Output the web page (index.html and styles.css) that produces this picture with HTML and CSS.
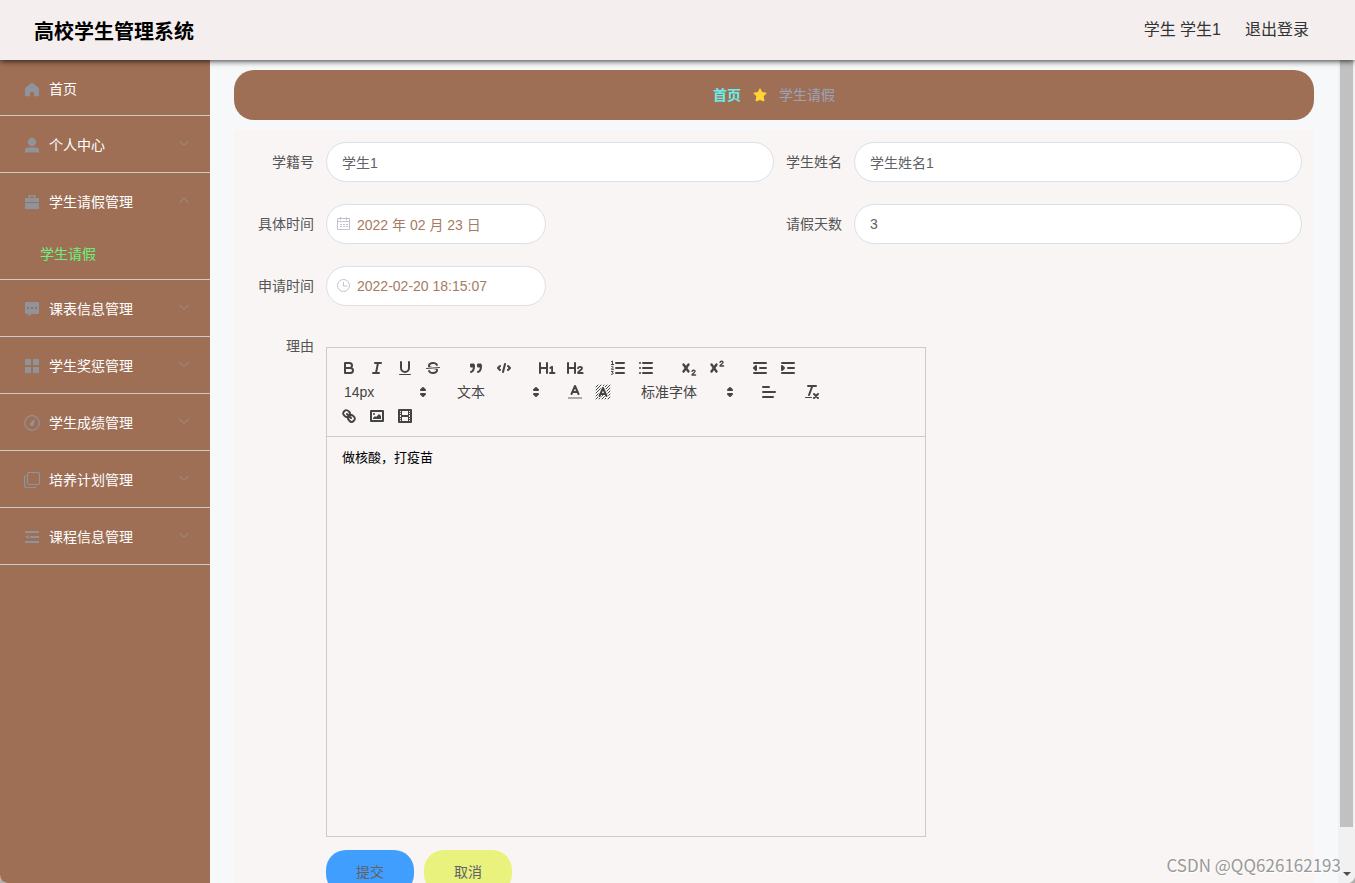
FILE: index.html
```html
<!DOCTYPE html>
<html lang="zh-CN">
<head>
<meta charset="utf-8">
<title>高校学生管理系统</title>
<link rel="stylesheet" href="styles.css">
</head>
<body>
<div class="app">
  <header class="topbar">
    <h1 class="brand">高校学生管理系统</h1>
    <div class="account">
      <span>学生 学生1</span>
      <a href="#logout">退出登录</a>
    </div>
  </header>

  <div class="shell">
    <nav class="sidebar" aria-label="主菜单">
      <div class="menu-group">
        <a class="menu-item menu-home" href="#home">
          <svg class="menu-icon" viewBox="0 0 16 16"><path class="solid" d="M8 1.500 15 7v7.500a.7.7 0 0 1-.7.7H10v-4H6v4H1.700a.7.7 0 0 1-.7-.7V7z"/></svg>
          <span class="menu-label">首页</span>
        </a>
      </div>
      <div class="menu-group">
        <a class="menu-item" href="#profile">
          <svg class="menu-icon" viewBox="0 0 16 16"><circle class="solid" cx="8" cy="5" r="4.200"/><path class="solid" d="M1 15.500v-2a3 3 0 0 1 3-3h8a3 3 0 0 1 3 3v2z"/></svg>
          <span class="menu-label">个人中心</span>
          <svg class="chevron" viewBox="0 0 12 12"><path d="m1.500 4 4.500 4.500L10.500 4"/></svg>
        </a>
      </div>
      <div class="menu-group">
        <a class="menu-item" href="#leave-manage">
          <svg class="menu-icon" viewBox="0 0 16 16"><path class="solid" fill-rule="evenodd" d="M4.500 1h7v3H15v4H1V4h3.500zM6 2.500V4h4V2.500z"/><path class="solid" d="M1 9h14v6H1z"/></svg>
          <span class="menu-label">学生请假管理</span>
          <svg class="chevron" viewBox="0 0 12 12"><path d="M1.500 8.500 6 4l4.500 4.500"/></svg>
        </a>
        <a class="submenu-item" href="#leave">学生请假</a>
      </div>
      <div class="menu-group">
        <a class="menu-item" href="#timetable">
          <svg class="menu-icon" viewBox="0 0 16 16"><path class="solid" fill-rule="evenodd" d="M2 1h12a1 1 0 0 1 1 1v10a1 1 0 0 1-1 1H8l-3.500 2.500V13H2a1 1 0 0 1-1-1V2a1 1 0 0 1 1-1zM3 6v2h2V6zm4 0v2h2V6zm4 0v2h2V6z"/></svg>
          <span class="menu-label">课表信息管理</span>
          <svg class="chevron" viewBox="0 0 12 12"><path d="m1.500 4 4.500 4.500L10.500 4"/></svg>
        </a>
      </div>
      <div class="menu-group">
        <a class="menu-item" href="#awards">
          <svg class="menu-icon" viewBox="0 0 16 16"><g class="solid"><rect x="1" y="1" width="6" height="6" rx=".5"/><rect x="9" y="1" width="6" height="6" rx=".5"/><rect x="1" y="9" width="6" height="6" rx=".5"/><rect x="9" y="9" width="6" height="6" rx=".5"/></g></svg>
          <span class="menu-label">学生奖惩管理</span>
          <svg class="chevron" viewBox="0 0 12 12"><path d="m1.500 4 4.500 4.500L10.500 4"/></svg>
        </a>
      </div>
      <div class="menu-group">
        <a class="menu-item" href="#grades">
          <svg class="menu-icon" viewBox="0 0 16 16"><circle class="outline" cx="8" cy="8" r="7.300"/><path class="solid" d="M10.800 3.500 10 9.300a2 2 0 1 1-3.700-1.300z"/></svg>
          <span class="menu-label">学生成绩管理</span>
          <svg class="chevron" viewBox="0 0 12 12"><path d="m1.500 4 4.500 4.500L10.500 4"/></svg>
        </a>
      </div>
      <div class="menu-group">
        <a class="menu-item" href="#plans">
          <svg class="menu-icon" viewBox="0 0 16 16"><rect class="outline" x="3.500" y=".5" width="12" height="12" rx="1.500"/><path class="outline" d="M2 4H.5v9.500a2 2 0 0 0 2 2H11l1-1"/></svg>
          <span class="menu-label">培养计划管理</span>
          <svg class="chevron" viewBox="0 0 12 12"><path d="m1.500 4 4.500 4.500L10.500 4"/></svg>
        </a>
      </div>
      <div class="menu-group">
        <a class="menu-item" href="#courses">
          <svg class="menu-icon" viewBox="0 0 16 16"><path class="solid" d="M1 2h14v2H1zM6 7h9v2H6zM1 12h14v2H1zM1 8l3.500-2v4z"/></svg>
          <span class="menu-label">课程信息管理</span>
          <svg class="chevron" viewBox="0 0 12 12"><path d="m1.500 4 4.500 4.500L10.500 4"/></svg>
        </a>
      </div>
    </nav>

    <main class="content">
      <nav class="breadcrumb" aria-label="当前位置">
        <a class="crumb-home" href="#home">首页</a>
        <svg class="crumb-star" viewBox="0 0 14 14"><path d="m7 .8 1.900 3.700 4.300.7-3 3 .8 4.800L7 11.500 3 13l.8-4.800-3-3 4.300-.7z"/></svg>
        <span class="crumb-current">学生请假</span>
      </nav>

      <form class="panel">
        <div class="field">
          <label class="label" for="student-no">学籍号</label>
          <input class="text-input" id="student-no" type="text" value="学生1">
        </div>
        <div class="field">
          <label class="label" for="student-name">学生姓名</label>
          <input class="text-input" id="student-name" type="text" value="学生姓名1">
        </div>
        <div class="field">
          <label class="label" for="leave-date">具体时间</label>
          <div class="date-box">
            <svg class="date-icon" viewBox="0 0 14 14"><path d="M.5 1.500h12v11H.5zM.5 4.500h12M3.500 0v3M9.500 0v3M3 7.500h2M6 7.500h2M9 7.500h2M3 9.500h2M6 9.500h2M9 9.500h2"/></svg>
            <input class="date-input" id="leave-date" type="text" value="2022 年 02 月 23 日">
          </div>
        </div>
        <div class="field">
          <label class="label" for="leave-days">请假天数</label>
          <input class="text-input" id="leave-days" type="text" value="3">
        </div>
        <div class="field field-wide">
          <label class="label" for="apply-time">申请时间</label>
          <div class="date-box">
            <svg class="date-icon" viewBox="0 0 14 14"><circle cx="6.500" cy="6.500" r="6"/><path d="M6.500 3v4h4"/></svg>
            <input class="date-input" id="apply-time" type="text" value="2022-02-20 18:15:07">
          </div>
        </div>
        <div class="field field-wide field-editor">
          <label class="label" for="reason">理由</label>
          <div class="editor">
            <div class="toolbar">
              <div class="tools">
                <button class="tool" type="button" aria-label="加粗"><svg viewBox="0 0 18 18"><path d="M5 4h4.500a2.500 2.500 0 0 1 0 5H5zM5 9h5.500a2.500 2.500 0 0 1 0 5H5z"/></svg></button>
                <button class="tool" type="button" aria-label="斜体"><svg viewBox="0 0 18 18"><path d="M7 4h6M5 14h6M8 14l2-10"/></svg></button>
                <button class="tool" type="button" aria-label="下划线"><svg viewBox="0 0 18 18"><path d="M5 3v6a4 4 0 0 0 8 0V3"/><rect class="fill" x="3" y="15" width="12" height="1" rx=".5"/></svg></button>
                <button class="tool" type="button" aria-label="删除线"><svg viewBox="0 0 18 18"><path class="thin" d="m15.500 8.500-13 1"/><path class="fill" d="M9.007 8C6.542 7.791 6 7.519 6 6.500 6 5.792 7.283 5 9 5c1.571 0 2.765.679 2.969 1.309a1 1 0 0 0 1.900-.617C13.356 4.106 11.354 3 9 3 6.200 3 4 4.538 4 6.500a3.200 3.200 0 0 0 .5 1.843zM8.984 10C11.457 10.208 12 10.479 12 11.500c0 .708-1.283 1.500-3 1.500-1.571 0-2.765-.679-2.969-1.309a1 1 0 1 0-1.900.617C4.644 13.894 6.646 15 9 15c2.800 0 5-1.538 5-3.500a3.200 3.200 0 0 0-.5-1.843z"/></svg></button>
              </div>
              <div class="tools">
                <button class="tool" type="button" aria-label="引用"><svg viewBox="0 0 18 18"><path class="both thin" d="M4 5h3v3H4zM11 5h3v3h-3z"/><path d="M7 7c0 5-3 6-3 6M14 7c0 5-3 6-3 6M4.500 6h2M11.500 6h2"/></svg></button>
                <button class="tool" type="button" aria-label="代码"><svg viewBox="0 0 18 18"><path d="M5 7 3 9l2 2M13 7l2 2-2 2M10 5 8 13"/></svg></button>
              </div>
              <div class="tools">
                <button class="tool" type="button" aria-label="一级标题"><svg viewBox="0 0 18 18"><path d="M2 4v10M9 4v10M2 9h7"/><path class="digit" d="m12.200 9 1.900-1.300V14M12 14h4.500"/></svg></button>
                <button class="tool" type="button" aria-label="二级标题"><svg viewBox="0 0 18 18"><path d="M2 4v10M9 4v10M2 9h7"/><path class="digit" d="M12 9.300c.4-2 4-2 4 0 0 1.700-3.500 2.700-4 4.700h4.700"/></svg></button>
              </div>
              <div class="tools">
                <button class="tool" type="button" aria-label="有序列表"><svg viewBox="0 0 18 18"><path d="M7 4h8M7 9h8M7 14h8"/><path class="thin" d="m2.500 2.500 1-.5v3.500M2.300 5.500h2.400M2.500 7.500c1-.8 2 0 1.500.8l-1.700 2h2.400M2.400 12.400h1.800l-1 1.300c2 0 1.300 2-.8 1.600"/></svg></button>
                <button class="tool" type="button" aria-label="无序列表"><svg viewBox="0 0 18 18"><path d="M6 4h9M6 9h9M6 14h9M3 4h0M3 9h0M3 14h0"/></svg></button>
              </div>
              <div class="tools">
                <button class="tool" type="button" aria-label="下标"><svg viewBox="0 0 18 18"><path class="cross" d="m3.500 5.500 5 7M8.500 5.500l-5 7"/><path class="index" d="M12 12.300c.3-1.500 3.200-1.500 3 .2-.1 1-2.600 2-3 3.500h3.600"/></svg></button>
                <button class="tool" type="button" aria-label="上标"><svg viewBox="0 0 18 18"><path class="cross" d="m3.500 5.500 5 7M8.500 5.500l-5 7"/><path class="index" d="M12 3.300c.3-1.500 3.200-1.500 3 .2-.1 1-2.600 2-3 3.500h3.600"/></svg></button>
              </div>
              <div class="tools">
                <button class="tool" type="button" aria-label="减少缩进"><svg viewBox="0 0 18 18"><path d="M3 4h12M9 9h6M3 14h12"/><path class="both" d="M5 7v4L3 9z"/></svg></button>
                <button class="tool" type="button" aria-label="增加缩进"><svg viewBox="0 0 18 18"><path d="M3 4h12M9 9h6M3 14h12"/><path class="both" d="M3 7v4l2-2z"/></svg></button>
              </div>
              <div class="tools picker">
                <select class="picker-select" aria-label="字号"><option>14px</option></select>
                <svg class="picker-arrow" viewBox="0 0 18 18"><path class="both" d="m7 11 2 2 2-2zM7 7l2-2 2 2z"/></svg>
              </div>
              <div class="tools picker">
                <select class="picker-select" aria-label="段落格式"><option>文本</option></select>
                <svg class="picker-arrow" viewBox="0 0 18 18"><path class="both" d="m7 11 2 2 2-2zM7 7l2-2 2 2z"/></svg>
              </div>
              <div class="tools">
                <button class="tool" type="button" aria-label="文字颜色"><svg viewBox="0 0 18 18"><path class="swatch" d="M2 15h14"/><path d="M5.500 11 9 3l3.500 8M11.600 9H6.400"/></svg></button>
                <button class="tool" type="button" aria-label="背景颜色"><svg viewBox="0 0 18 18"><path class="hatch" d="M2 4l2-2M2 7l5-5M2 10l8-8M2 13l11-11M2 16 16 2M5 16 16 5M8 16l8-8M11 16l5-5M14 16l2-2"/><path class="halo" d="M5.500 13 9 5l3.500 8"/><path d="M5.500 13 9 5l3.500 8M11.600 11H6.400"/></svg></button>
              </div>
              <div class="tools picker picker-font">
                <select class="picker-select" aria-label="字体"><option>标准字体</option></select>
                <svg class="picker-arrow" viewBox="0 0 18 18"><path class="both" d="m7 11 2 2 2-2zM7 7l2-2 2 2z"/></svg>
              </div>
              <div class="tools">
                <button class="tool" type="button" aria-label="对齐"><svg viewBox="0 0 18 18"><path d="M3 4h6M3 9h12M3 14h10"/></svg></button>
              </div>
              <div class="tools">
                <button class="tool" type="button" aria-label="清除格式"><svg viewBox="0 0 18 18"><path d="M5 3h8M6 12l3.350-9M11 11l4 4M15 11l-4 4"/><rect class="fill" x="2" y="14" width="7" height="1" rx=".5"/></svg></button>
              </div>
              <div class="tools">
                <button class="tool" type="button" aria-label="链接"><svg viewBox="0 0 18 18"><path d="m7 7 4 4M8.900 4.577a3.476 3.476 0 0 1 .36 4.679A3.476 3.476 0 0 1 4.577 8.900C3.185 7.500 2.035 6.400 4.217 4.217S7.500 3.185 8.900 4.577zM13.423 9.100a3.476 3.476 0 0 0-4.679-.36 3.476 3.476 0 0 0 .36 4.679c1.392 1.392 2.500 2.542 4.679.36S14.815 10.500 13.423 9.100z"/></svg></button>
                <button class="tool" type="button" aria-label="图片"><svg viewBox="0 0 18 18"><rect x="3" y="4" width="12" height="10"/><circle class="fill" cx="6" cy="7" r="1"/><path class="fill" d="M5 12v-1l2-2 1 1 3-3 2 2v3z"/></svg></button>
                <button class="tool" type="button" aria-label="视频"><svg viewBox="0 0 18 18"><rect x="3" y="3" width="12" height="12"/><path class="fill" d="M5 3h1v12H5zM12 3h1v12h-1zM5 8h8v2H5zM3 5h3v1H3zM3 7h3v1H3zM3 10h3v1H3zM3 12h3v1H3zM12 5h3v1h-3zM12 7h3v1h-3zM12 10h3v1h-3zM12 12h3v1h-3z"/></svg></button>
              </div>
            </div>
            <textarea class="editor-text" id="reason">做核酸，打疫苗</textarea>
          </div>
        </div>
        <div class="actions">
          <button class="action action-submit" type="submit">提交</button>
          <button class="action action-cancel" type="button">取消</button>
        </div>
      </form>
    </main>

    <div class="scroll-track" aria-hidden="true">
      <div class="scroll-thumb"></div>
      <svg class="scroll-arrow" viewBox="0 0 8 4"><path d="M0 0h8L4 4z"/></svg>
    </div>
  </div>
  <div class="watermark">CSDN @QQ626162193</div>
</div>
</body>
</html>
```
FILE: styles.css
```css
* {
  box-sizing: border-box;
}

html {
  background: #b5b1af;
}

body {
  margin: 0;
  font-family: "Liberation Sans", "Noto Sans CJK SC", sans-serif;
  font-size: 14px;
  color: #606266;
}

a {
  color: inherit;
  text-decoration: none;
}

input,
select,
textarea,
button {
  font: inherit;
  color: inherit;
}

.app {
  position: relative;
  display: flex;
  flex-direction: column;
  height: 100vh;
  overflow: hidden;
  border-radius: 0 0 8px 8px;
  background: #f6f8fa;
}

/* Header */
.topbar {
  position: relative;
  z-index: 1;
  display: flex;
  flex: none;
  align-items: center;
  justify-content: space-between;
  height: 60px;
  padding: 0 46px 0 34px;
  background: #f4eeee;
  box-shadow: 0 1px 6px rgba(0, 0, 0, 0.8);
}

.brand {
  margin: 0;
  font-size: 20px;
  font-weight: 700;
  color: #000;
}

.account {
  display: flex;
  gap: 24px;
  font-size: 16px;
  line-height: 24px;
  color: #333;
}

.shell {
  display: flex;
  flex: 1;
  min-height: 0;
}

/* Side menu */
.sidebar {
  flex: none;
  width: 210px;
  background: #9e6f55;
}

.menu-group {
  border-bottom: 1px solid #ccc;
}

.menu-item {
  display: flex;
  align-items: center;
  height: 56px;
  padding: 0 20px 0 24px;
  color: #fff;
}

.menu-home {
  height: 55px;
}

.menu-label {
  flex: 1;
}

.menu-icon {
  width: 16px;
  height: 16px;
  margin: 2px 9px 0 0;
}

.solid {
  fill: #909399;
}

.outline {
  fill: none;
  stroke: #909399;
  stroke-width: 1.2;
}

.chevron {
  width: 12px;
  height: 12px;
  margin-bottom: 2px;
  fill: none;
  stroke: #9b938e;
}

.submenu-item {
  display: block;
  padding-left: 40px;
  line-height: 50px;
  color: #6cf27c;
}

/* Content */
.content {
  flex: 1;
  min-width: 0;
  padding: 10px 24px 0;
}

.breadcrumb {
  display: flex;
  align-items: center;
  justify-content: center;
  gap: 12px;
  height: 50px;
  margin-bottom: 10px;
  border-radius: 20px;
  line-height: 18px;
  background: #9e6f55;
}

.crumb-home {
  font-weight: 700;
  color: #68efee;
}

.crumb-star {
  width: 14px;
  height: 14px;
  fill: #ffd633;
  stroke: #ffd633;
  stroke-linejoin: round;
}

.crumb-current {
  color: #9aa3bb;
}

.panel {
  display: grid;
  grid-template-columns: 1fr 1fr;
  row-gap: 22px;
  padding: 12px;
  background: #f9f5f4;
}

.field {
  display: flex;
}

.field-wide,
.actions {
  grid-column: 1 / -1;
}

.label {
  flex: none;
  width: 80px;
  padding-right: 12px;
  line-height: 40px;
  text-align: right;
  color: #555;
}

.text-input,
.date-box {
  height: 40px;
  border: 1px solid #dcdfe6;
  border-radius: 20px;
  background: #fff;
}

.text-input {
  flex: 1;
  min-width: 0;
  padding: 0 15px;
}

.date-box {
  display: flex;
  align-items: center;
  gap: 6px;
  width: 220px;
  padding: 0 10px;
}

.date-icon {
  flex: none;
  width: 14px;
  height: 14px;
  fill: none;
  stroke: #c0c4cc;
}

.date-input {
  flex: 1;
  min-width: 0;
  padding: 0;
  border: 0;
  background: none;
  color: #a57b62;
}

/* Rich text editor */
.field-editor .label {
  line-height: 36px;
}

.editor {
  width: 600px;
  margin-top: 19px;
  border: 1px solid #ccc;
}

.toolbar {
  display: flex;
  flex-wrap: wrap;
  padding: 8px;
  border-bottom: 1px solid #ccc;
}

.tools {
  display: flex;
  margin-right: 15px;
}

.tool {
  width: 28px;
  height: 24px;
  padding: 3px 5px;
  border: 0;
  background: none;
}

.tool svg,
.picker-arrow {
  display: block;
  width: 18px;
  height: 18px;
  fill: none;
  stroke: #444;
  stroke-width: 2;
  stroke-linecap: round;
  stroke-linejoin: round;
}

.tool .thin {
  stroke-width: 1;
}

.tool .digit {
  stroke-width: 1.8;
}

.tool .cross {
  stroke-width: 2.4;
}

.tool .index {
  stroke-width: 1.4;
}

.tool .fill {
  fill: #444;
  stroke: none;
}

.both {
  fill: #444;
}

.tool .swatch {
  stroke: #aaa;
  stroke-linecap: butt;
}

.tool .hatch {
  stroke-width: 1;
}

.tool .halo {
  stroke: #f9f5f4;
  stroke-width: 4;
}

.picker {
  position: relative;
  width: 98px;
  height: 24px;
}

.picker-font {
  width: 108px;
}

.picker-select {
  width: 100%;
  padding: 0 20px 0 9px;
  border: 0;
  background: none;
  color: #444;
  appearance: none;
}

.picker-arrow {
  position: absolute;
  top: 3px;
  right: 1px;
  pointer-events: none;
}

.editor-text {
  display: block;
  width: 100%;
  height: 399px;
  padding: 11px 15px;
  border: 0;
  outline: 0;
  background: none;
  font-size: 13px;
  line-height: 20px;
  color: #000;
  resize: none;
}

/* Form buttons */
.actions {
  display: flex;
  gap: 10px;
  margin-top: -9px;
  padding-left: 80px;
}

.action {
  width: 88px;
  height: 44px;
  padding: 0 0 2px;
  border: 0;
  border-radius: 20px;
}

.action-submit {
  background: #409eff;
}

.action-cancel {
  background: #e8f27d;
}

/* Window scrollbar */
.scroll-track {
  display: flex;
  flex: none;
  flex-direction: column;
  align-items: center;
  justify-content: space-between;
  width: 17px;
  padding-bottom: 7px;
  background: #f1f1f1;
}

.scroll-thumb {
  width: 13px;
  height: 94%;
  margin-right: 1px;
  background: #c1c1c1;
}

.scroll-arrow {
  width: 8px;
  height: 4px;
  fill: #505050;
}

.watermark {
  position: absolute;
  right: 14px;
  bottom: 8px;
  z-index: 2;
  font-family: "Noto Sans CJK SC", sans-serif;
  font-size: 17px;
  font-weight: 400;
  line-height: 20px;
  color: #999;
  text-shadow: 1px 1px 0 #fff;
}
```
